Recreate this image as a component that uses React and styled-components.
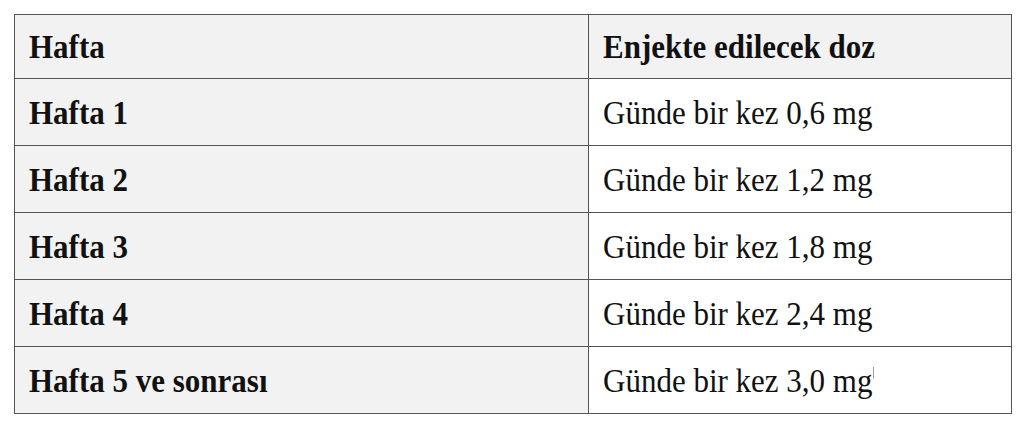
import React from "react";
import styled, { createGlobalStyle } from "styled-components";

const Global = createGlobalStyle`
  html, body { margin: 0; padding: 0; background: #ffffff; }
  body { font-family: "Liberation Serif", "Times New Roman", serif; color: #111; }
`;

const Page = styled.div`
  padding: 14px 13px 0 14px;
`;

const Table = styled.table`
  border-collapse: collapse;
  width: 997px;
  table-layout: fixed;
  font-family: "Liberation Serif", "Times New Roman", serif;
  font-size: 31px;
  border: 1px solid #555555;
`;

const Row = styled.tr`
  height: ${(p) => (p.$head ? "64px" : "67px")};
`;

const Cell = styled.td`
  border: 1px solid #555555;
  padding: 0 0 0 14px;
  vertical-align: middle;
  white-space: nowrap;
  font-weight: ${(p) => (p.$bold ? 700 : 400)};
  background: ${(p) => (p.$shaded ? "#f2f2f2" : "#ffffff")};
  color: #111;
  line-height: 1;
`;

const Text = styled.span`
  display: inline-block;
  transform: scaleY(1.07);
  transform-origin: 50% 60%;
`;

const Mark = styled.span`
  display: inline-block;
  width: 1px;
  height: 11px;
  background: #9a9a9a;
  vertical-align: 12px;
  margin-left: 1px;
`;

const rows = [
  ["Hafta 1", "Günde bir kez 0,6 mg"],
  ["Hafta 2", "Günde bir kez 1,2 mg"],
  ["Hafta 3", "Günde bir kez 1,8 mg"],
  ["Hafta 4", "Günde bir kez 2,4 mg"],
  ["Hafta 5 ve sonrası", "Günde bir kez 3,0 mg", true],
];

export default function App() {
  return (
    <Page>
      <Global />
      <Table>
        <colgroup>
          <col style={{ width: 574 }} />
          <col style={{ width: 423 }} />
        </colgroup>
        <tbody>
          <Row $head>
            <Cell $bold $shaded><Text>Hafta</Text></Cell>
            <Cell $bold $shaded><Text>Enjekte edilecek doz</Text></Cell>
          </Row>
          {rows.map(([w, d, mark]) => (
            <Row key={w}>
              <Cell $bold $shaded><Text>{w}</Text></Cell>
              <Cell>
                <Text>
                  {d}
                  {mark && <Mark />}
                </Text>
              </Cell>
            </Row>
          ))}
        </tbody>
      </Table>
    </Page>
  );
}
